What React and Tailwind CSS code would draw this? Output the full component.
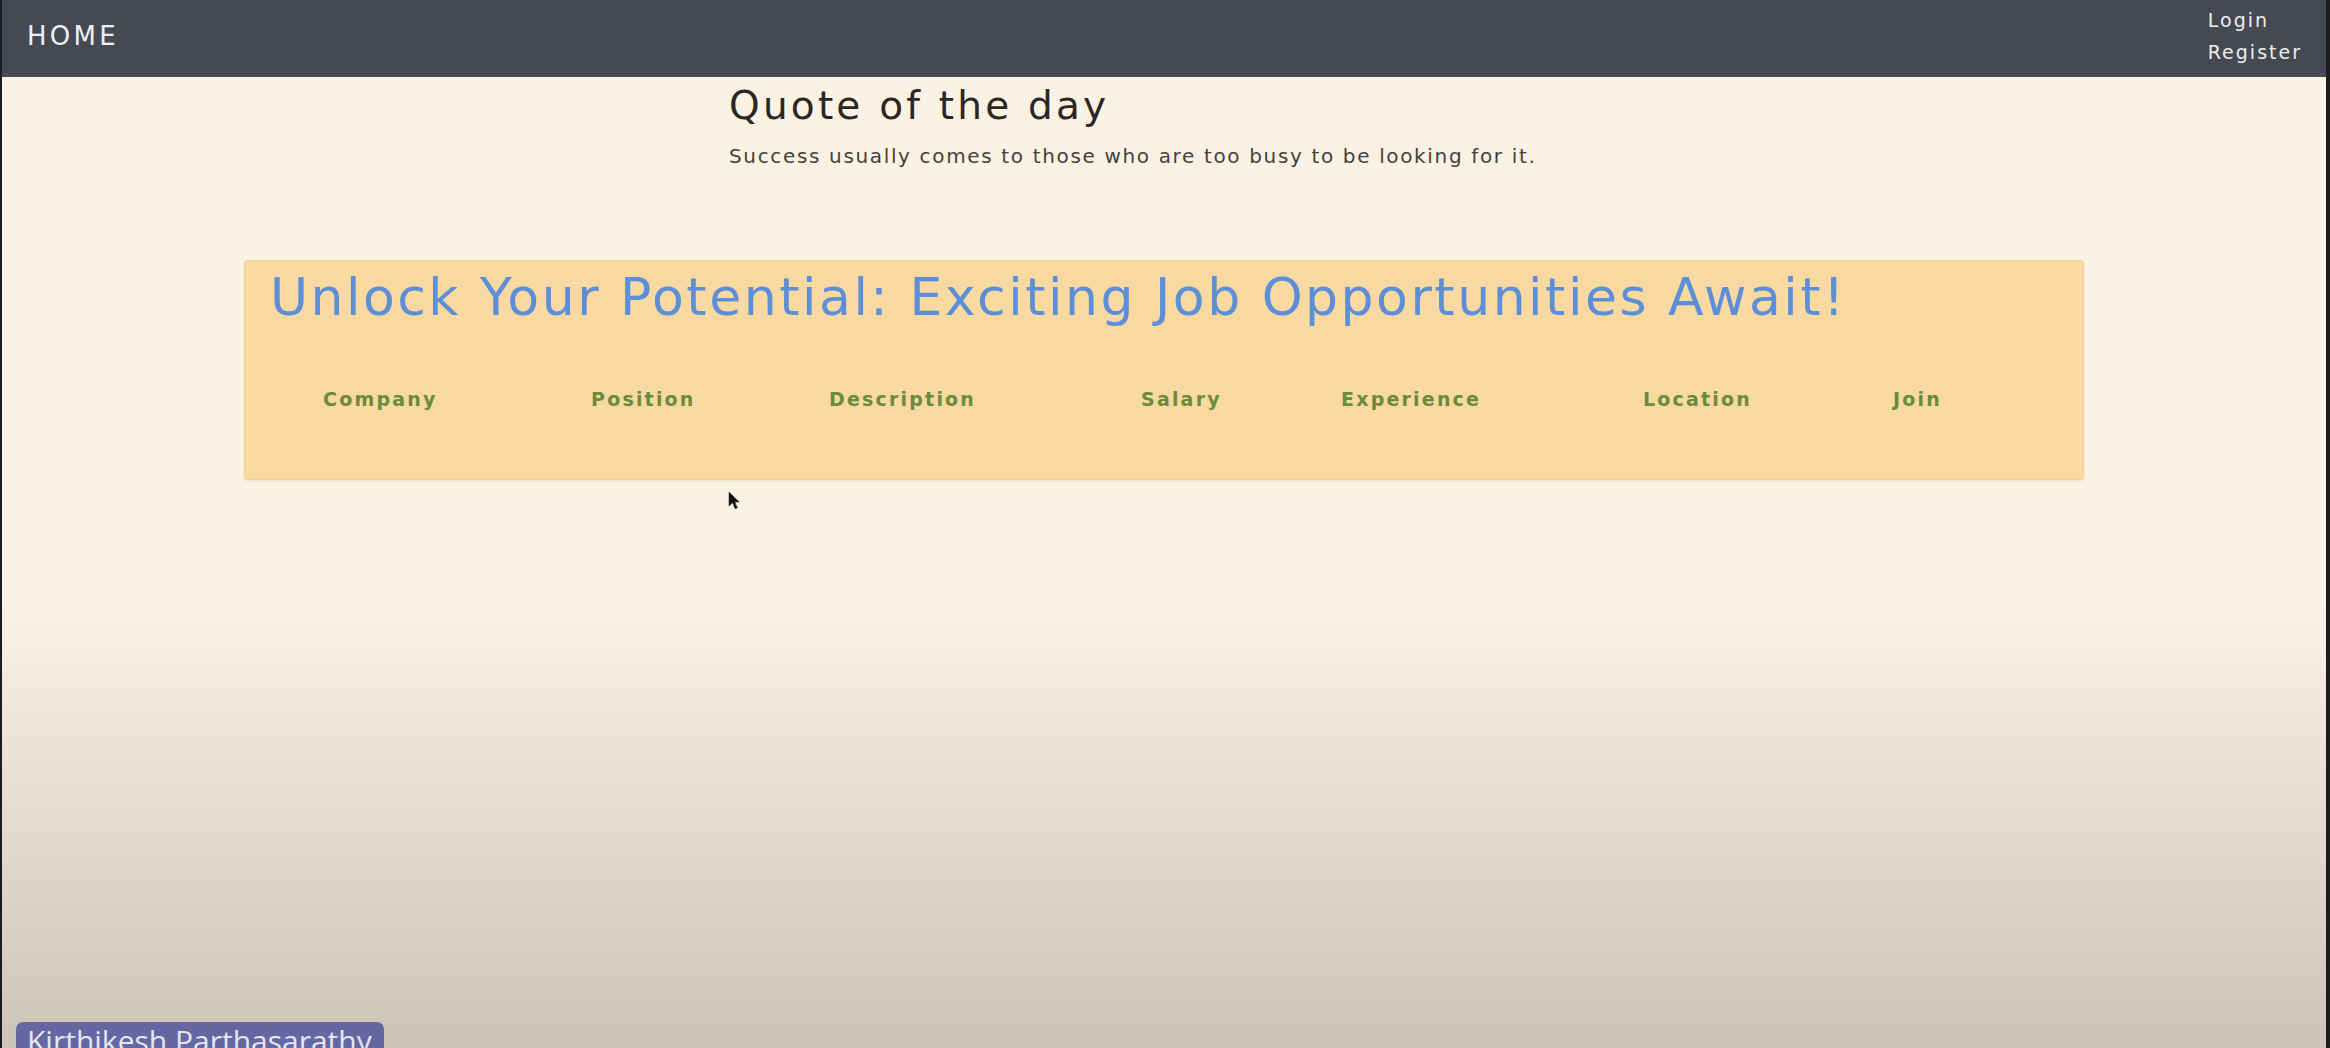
import React from 'react'

const columns = [
  { label: 'Company',     width: 'w-[268px]' },
  { label: 'Position',    width: 'w-[238px]' },
  { label: 'Description', width: 'w-[312px]' },
  { label: 'Salary',      width: 'w-[200px]' },
  { label: 'Experience',  width: 'w-[302px]' },
  { label: 'Location',    width: 'w-[250px]' },
  { label: 'Join',        width: 'w-[120px]' },
]

function Navbar() {
  return (
    <nav className="flex h-[77px] items-start justify-between bg-[#454a52] pl-[25px] pr-[24px] text-[#eeeef2]">
      <a href="#" className="pt-[23px] text-[26px] leading-[26px] tracking-[3.3px]">
        HOME
      </a>
      <div className="flex flex-col pt-[4px] text-[19px] leading-[32px] tracking-[2px]">
        <a href="#">Login</a>
        <a href="#">Register</a>
      </div>
    </nav>
  )
}

function Quote() {
  return (
    <section className="mx-auto w-[870px] pt-[9px]">
      <h2 className="text-[39px] leading-none tracking-[3.2px] text-[#2b2724]">Quote of the day</h2>
      <p className="mt-[21px] text-[20px] leading-none tracking-[1.65px] text-[#46413c]">
        Success usually comes to those who are too busy to be looking for it.
      </p>
    </section>
  )
}

function JobsCard() {
  return (
    <section className="mx-auto mt-[94px] h-[220px] w-[1840px] rounded-[4px] border border-[#f1d193] bg-[#f8d9a1] pl-[25px] pt-[10px] shadow-[0_1px_2px_rgba(120,90,40,0.12)]">
      <h1 className="text-[52px] leading-none tracking-[2.5px] text-[#5d8fd8]">
        Unlock Your Potential: Exciting Job Opportunities Await!
      </h1>
      <table className="ml-[53px] mt-[67px] border-collapse">
        <thead>
          <tr>
            {columns.map((c) => (
              <th
                key={c.label}
                className={`${c.width} p-0 text-left text-[19px] font-bold leading-[19px] tracking-[2.2px] text-[#6b8a3a]`}
              >
                {c.label}
              </th>
            ))}
          </tr>
        </thead>
        <tbody />
      </table>
    </section>
  )
}

export default function App() {
  return (
    <div className="relative h-[1048px] overflow-hidden border-l-[2px] border-r-[4px] border-[#1c1c1e] bg-linear-to-b from-[#fcf2e3] from-[58%] to-[#cdc4b6] font-['DejaVu_Sans',sans-serif]">
      <Navbar />
      <Quote />
      <JobsCard />

      {/* mouse pointer caught in the capture */}
      <svg className="absolute left-[726px] top-[491px]" width="13" height="19" viewBox="0 0 13 19">
        <path d="M1 1 L1 15 L4.5 11.8 L7.2 17.8 L9.4 16.8 L6.8 11 L11.2 11 Z" fill="#111" stroke="#333" strokeWidth="0.6" />
      </svg>

      {/* participant name tag, partly below the edge of the capture */}
      <div className="absolute left-[14px] top-[1022px] h-[40px] w-[368px] rounded-t-[7px] bg-[#6467a2] pl-[11px] font-['Open_Sans',sans-serif] text-[30px] leading-[38px] text-[#e6e6f2]">
        Kirthikesh Parthasarathy
      </div>
    </div>
  )
}
